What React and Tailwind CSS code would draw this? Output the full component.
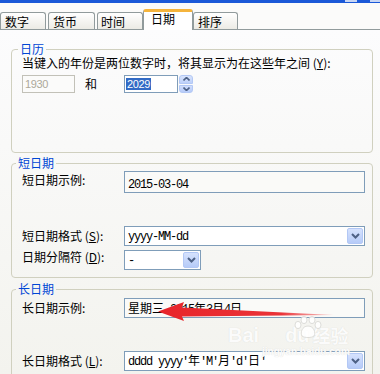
import React from 'react';

function Mix({ text }) {
  const parts = text.match(/[\u3000-\u9fff\uff00-\uffef]+|[^\u3000-\u9fff\uff00-\uffef]+/g) || [];
  return (
    <>
      {parts.map((p, i) =>
        /[\u3000-\u9fff\uff00-\uffef]/.test(p) ? (
          <span key={i} className="font-['Noto_Sans_CJK_SC',sans-serif] tracking-normal">{p}</span>
        ) : (
          <span key={i} className="font-['Liberation_Mono',monospace] tracking-[-1.2px] whitespace-pre">{p}</span>
        )
      )}
    </>
  );
}

function Chevron() {
  return (
    <svg width="9" height="6" viewBox="0 0 9 6">
      <path d="M1 1 L4.5 4.5 L8 1" fill="none" stroke="#4d6185" strokeWidth="2" />
    </svg>
  );
}

function DropBtn() {
  return (
    <div className="w-[16px] h-[16px] shrink-0 rounded-[2px] border border-[#b3c8f5] bg-gradient-to-b from-[#d6e2fd] to-[#b6cbf8] flex items-center justify-center">
      <Chevron />
    </div>
  );
}

function Combo({ w, text }) {
  return (
    <div className={`${w} h-[20px] border border-[#7f9db9] bg-white flex items-center pl-[3px] pr-px`}>
      <div className="flex-1 text-[12px] leading-[14px] whitespace-nowrap">
        <Mix text={text} />
      </div>
      <DropBtn />
    </div>
  );
}

function Acc({ label, k }) {
  return (
    <span className="whitespace-nowrap">
      {label} (<span className="underline">{k}</span>):
    </span>
  );
}

function Tab({ w, pl, children }) {
  return (
    <div
      className={`${w} ${pl} h-[17px] pt-[2px] border border-b-0 border-[#919b9c] rounded-t-[3px] bg-gradient-to-b from-white to-[#ecebe5] leading-[14px] text-[12px]`}
    >
      {children}
    </div>
  );
}

export default function App() {
  return (
    <div className="w-[380px] h-[374px] overflow-hidden relative bg-[#fbfbfa] text-black text-[12px] leading-[14px] font-['Noto_Sans_CJK_SC',sans-serif]">
      {/* title bar remnant */}
      <div className="h-[3px] bg-[#1b59d8] flex justify-end items-start">
        <div className="w-[12px] h-[2px] bg-[#c8d6f4] mr-[13px]" />
        <div className="w-[10px] h-[2px] bg-[#c8d6f4]" />
      </div>

      {/* tabs */}
      <div className="flex items-end h-[27px] border-b border-[#919b9c]">
        <Tab w="w-[46px]" pl="pl-[4px]">数字</Tab>
        <div className="w-[2px]" />
        <Tab w="w-[47px]" pl="pl-[4px]">货币</Tab>
        <div className="w-[2px]" />
        <Tab w="w-[46px]" pl="pl-[3px]">时间</Tab>
        <div className="relative z-10 w-[50px] h-[21px] -mb-px pl-[7px] bg-white border-x border-[#919b9c] border-t-[3px] border-t-[#f5b43c] rounded-t-[3px] text-[12px] leading-[14px]">
          日期
        </div>
        <Tab w="w-[45px]" pl="pl-[4px]">排序</Tab>
      </div>

      {/* panel */}
      <div className="h-[344px] bg-gradient-to-b from-[#fcfcfd] to-[#f3f3ee] pl-[11px] pt-[19px] flex flex-col">
        {/* 日历 */}
        <div className="w-[362px] h-[104px] shrink-0 border border-[#d0d0bf] rounded-[4px] pl-[10px] pr-[7px]">
          <div className="-mt-[8px] -ml-[4px] w-fit px-[2px] bg-[#fbfbfb] text-[#0046d5] leading-[14px]">日历</div>
          <div className="leading-[14px] whitespace-nowrap">
            当键入的年份是两位数字时，将其显示为在这些年之间 (<span className="underline">Y</span>):
          </div>
          <div className="mt-[5px] flex items-center h-[18px]">
            <div className="w-[53px] h-[18px] border border-[#c2c1b8] bg-[#fbfbfa] pl-[2px] flex items-center text-[#aca899] text-[11px] font-['Liberation_Sans',sans-serif] tracking-[-0.4px]">
              1930
            </div>
            <div className="ml-[10px]">和</div>
            <div className="ml-[27px] w-[54px] h-[18px] border border-[#7f9db9] bg-white pl-[1px] flex items-center">
              <span className="bg-[#316ac5] text-white text-[11px] leading-[12px] px-[1px] font-['Liberation_Sans',sans-serif] tracking-[-0.4px]">
                2029
              </span>
            </div>
            <div className="ml-[1px] w-[14px] h-[18px] flex flex-col gap-px">
              <div className="flex-1 rounded-t-[3px] border border-[#b3c8f5] bg-gradient-to-b from-[#d9e4fd] to-[#bdd0f9] flex items-center justify-center">
                <svg width="7" height="4" viewBox="0 0 7 4">
                  <path d="M0.5 3.5 L3.5 0.5 L6.5 3.5" fill="none" stroke="#4d6185" strokeWidth="1.6" />
                </svg>
              </div>
              <div className="flex-1 rounded-b-[3px] border border-[#b3c8f5] bg-gradient-to-b from-[#d0ddfc] to-[#b6cbf8] flex items-center justify-center">
                <svg width="7" height="4" viewBox="0 0 7 4">
                  <path d="M0.5 0.5 L3.5 3.5 L6.5 0.5" fill="none" stroke="#4d6185" strokeWidth="1.6" />
                </svg>
              </div>
            </div>
          </div>
        </div>

        {/* 短日期 */}
        <div className="mt-[10px] w-[362px] h-[115px] shrink-0 border border-[#d0d0bf] rounded-[4px] pl-[10px] pr-[7px]">
          <div className="-mt-[8px] -ml-[6px] w-fit px-[2px] bg-[#f8f8f6] text-[#0046d5] leading-[14px]">短日期</div>
          <div className="mt-[1px] flex items-start">
            <div className="w-[102px] mt-[2px]">短日期示例:</div>
            <div className="w-[241px] h-[22px] border border-[#7f9db9] bg-[#fafaf8] pl-[3px] pt-[4px] text-[12px] leading-[14px]">
              <Mix text="2015-03-04" />
            </div>
          </div>
          <div className="mt-[33px] flex items-center">
            <div className="w-[102px]">
              <Acc label="短日期格式" k="S" />
            </div>
            <Combo w="w-[241px]" text="yyyy-MM-dd" />
          </div>
          <div className="mt-[4px] flex items-start">
            <div className="w-[102px]">
              <Acc label="日期分隔符" k="D" />
            </div>
            <Combo w="w-[77px]" text="-" />
          </div>
        </div>

        {/* 长日期 */}
        <div className="mt-[11px] w-[362px] h-[120px] shrink-0 border border-[#d0d0bf] rounded-[4px] pl-[10px] pr-[7px]">
          <div className="-mt-[8px] -ml-[6px] w-fit px-[2px] bg-[#f5f5f2] text-[#0046d5] leading-[14px]">长日期</div>
          <div className="mt-[2px] flex items-start">
            <div className="w-[102px] mt-[3px]">长日期示例:</div>
            <div className="w-[241px] h-[20px] border border-[#7f9db9] bg-[#fafaf8] pl-[3px] pt-[2px] text-[12px] leading-[14px] whitespace-nowrap">
              <Mix text="星期三 2015年3月4日" />
            </div>
          </div>
          <div className="mt-[33px] flex items-center">
            <div className="w-[102px]">
              <Acc label="长日期格式" k="L" />
            </div>
            <Combo w="w-[241px]" text="dddd yyyy'年'M'月'd'日'" />
          </div>
        </div>
      </div>

      {/* watermark */}
      <div className="absolute left-[228px] top-[324px] pointer-events-none select-none text-white/90 [text-shadow:0_0_1px_#d4d4d0]">
        <div className="flex items-end font-['Liberation_Sans',sans-serif] font-bold text-[20px] leading-[22px]">
          <span>Bai</span>
          <span className="ml-[26px]">du</span>
          <span className="ml-[3px] font-['Noto_Sans_CJK_SC',sans-serif] text-[18px] leading-[22px]">经验</span>
        </div>
        <div className="ml-[34px] text-[10px] leading-[11px] font-['Liberation_Sans',sans-serif] font-bold">jingyan.baidu.com</div>
      </div>
      <svg className="absolute left-[292px] top-[316px] pointer-events-none" width="32" height="22" viewBox="0 0 32 22">
        <g fill="#ffffff" fillOpacity="0.85" stroke="#d6d6d2" strokeWidth="0.8">
          <ellipse cx="6" cy="9" rx="3" ry="3.6" />
          <ellipse cx="12" cy="4" rx="3" ry="3.6" />
          <ellipse cx="20" cy="4" rx="3" ry="3.6" />
          <ellipse cx="26" cy="9" rx="3" ry="3.6" />
          <path d="M16 10 C10 10 8 17 10 20 C12 22 20 22 22 20 C24 17 22 10 16 10 Z" />
        </g>
      </svg>

      {/* red arrow */}
      <svg className="absolute inset-0 pointer-events-none" width="380" height="374" viewBox="0 0 380 374">
        <defs>
          <linearGradient id="ar" x1="0" y1="0" x2="1" y2="0">
            <stop offset="0" stopColor="#e8242a" />
            <stop offset="0.7" stopColor="#ea3338" />
            <stop offset="1" stopColor="#f5a0a0" stopOpacity="0.6" />
          </linearGradient>
        </defs>
        <polygon points="158,311.5 184,302 182,307.5 334,315 182,316.5 184,321" fill="url(#ar)" />
      </svg>
    </div>
  );
}
